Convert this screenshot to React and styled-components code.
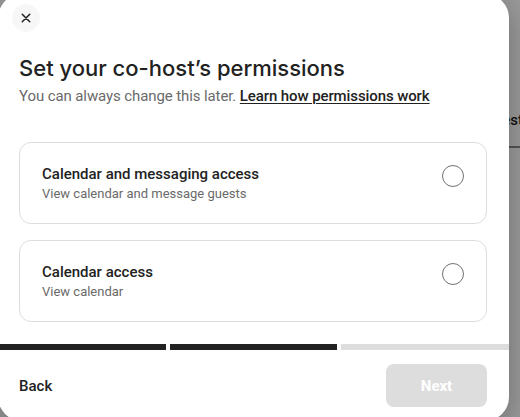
import React from "react";
import styled, { createGlobalStyle } from "styled-components";

const Global = createGlobalStyle`
  html, body { margin: 0; padding: 0; }
  body {
    width: 520px;
    height: 417px;
    overflow: hidden;
    font-family: Roboto, "Noto Sans", "Liberation Sans", sans-serif;
    -webkit-font-smoothing: antialiased;
  }
  * { box-sizing: border-box; }
`;

const Page = styled.div`
  position: relative;
  width: 520px;
  height: 417px;
  background: #ffffff;
  overflow: hidden;
`;

const TabRow = styled.div`
  display: flex;
  justify-content: flex-end;
  padding-top: 110px;
  margin-right: -3px;
  border-bottom: 2px solid #8c8c8c;
  height: 148px;
`;

const Tab = styled.div`
  font-size: 15px;
  font-weight: 500;
  color: #222222;
  line-height: 20px;
`;

const Scrim = styled.div`
  position: absolute;
  inset: 0;
  background: rgba(0, 0, 0, 0.4);
`;

const Modal = styled.div`
  position: absolute;
  left: -2px;
  top: -6px;
  width: 511px;
  height: 427px;
  background: #ffffff;
  border-radius: 24px;
  box-shadow: 0 8px 28px rgba(0, 0, 0, 0.28);
  display: flex;
  flex-direction: column;
  overflow: hidden;
`;

const Header = styled.div`
  padding: 10px 0 0 14px;
`;

const CloseButton = styled.button`
  width: 28px;
  height: 28px;
  border-radius: 50%;
  border: none;
  background: #f7f7f7;
  display: flex;
  align-items: center;
  justify-content: center;
  padding: 0;
  cursor: pointer;
`;

const Body = styled.div`
  padding: 22px 22px 0 21px;
  display: flex;
  flex-direction: column;
`;

const Title = styled.h1`
  margin: 0;
  font-family: Inter, "Noto Sans", sans-serif;
  font-size: 22px;
  line-height: 28px;
  font-weight: 500;
  color: #222222;
`;

const Subtitle = styled.p`
  margin: 4px 0 0;
  font-size: 15px;
  line-height: 20px;
  letter-spacing: -0.1px;
  color: #6a6a6a;
  font-weight: 400;
`;

const Link = styled.a`
  color: #222222;
  font-weight: 500;
  text-decoration: underline;
  text-underline-offset: 2px;
`;

const OptionList = styled.div`
  display: flex;
  flex-direction: column;
  gap: 16px;
  margin-top: 36px;
`;

const Card = styled.label`
  display: flex;
  align-items: flex-start;
  justify-content: space-between;
  min-height: 82px;
  padding: 21px 22px 0;
  border: 1px solid #dddddd;
  border-radius: 12px;
  cursor: pointer;
`;

const CardText = styled.div`
  display: flex;
  flex-direction: column;
`;

const CardTitle = styled.span`
  font-size: 15px;
  line-height: 20px;
  font-weight: 500;
  color: #222222;
`;

const CardSub = styled.span`
  font-size: 13px;
  line-height: 20px;
  color: #6a6a6a;
`;

const Radio = styled.span`
  width: 22px;
  height: 22px;
  border-radius: 50%;
  border: 1px solid #717171;
  margin-top: 1px;
  flex-shrink: 0;
`;

const Progress = styled.div`
  display: flex;
  gap: 4px;
  margin-top: 22px;
`;

const Segment = styled.div`
  flex: 1;
  height: 6px;
  background: ${(p) => (p.$done ? "#222222" : "#dddddd")};
`;

const Footer = styled.div`
  display: flex;
  align-items: center;
  justify-content: space-between;
  padding: 14px 22px 0 21px;
`;

const BackButton = styled.button`
  border: none;
  background: none;
  padding: 0;
  font-family: inherit;
  font-size: 15px;
  font-weight: 500;
  color: #222222;
  cursor: pointer;
`;

const NextButton = styled.button`
  width: 101px;
  height: 43px;
  border: none;
  border-radius: 8px;
  background: #dddddd;
  color: #ffffff;
  font-family: inherit;
  font-size: 15px;
  font-weight: 700;
`;

const options = [
  { title: "Calendar and messaging access", sub: "View calendar and message guests" },
  { title: "Calendar access", sub: "View calendar" },
];

export default function App() {
  return (
    <>
      <Global />
      <Page>
        <TabRow>
          <Tab>Guest</Tab>
        </TabRow>
        <Scrim />
        <Modal>
          <Header>
            <CloseButton aria-label="Close">
              <svg width="12" height="12" viewBox="0 0 32 32" fill="none" stroke="#222" strokeWidth="4" strokeLinecap="round">
                <path d="M6 6l20 20M26 6L6 26" />
              </svg>
            </CloseButton>
          </Header>
          <Body>
            <Title>Set your co-host’s permissions</Title>
            <Subtitle>
              You can always change this later. <Link href="#">Learn how permissions work</Link>
            </Subtitle>
            <OptionList>
              {options.map((o) => (
                <Card key={o.title}>
                  <CardText>
                    <CardTitle>{o.title}</CardTitle>
                    <CardSub>{o.sub}</CardSub>
                  </CardText>
                  <Radio />
                </Card>
              ))}
            </OptionList>
          </Body>
          <Progress>
            <Segment $done />
            <Segment $done />
            <Segment />
          </Progress>
          <Footer>
            <BackButton>Back</BackButton>
            <NextButton disabled>Next</NextButton>
          </Footer>
        </Modal>
      </Page>
    </>
  );
}
